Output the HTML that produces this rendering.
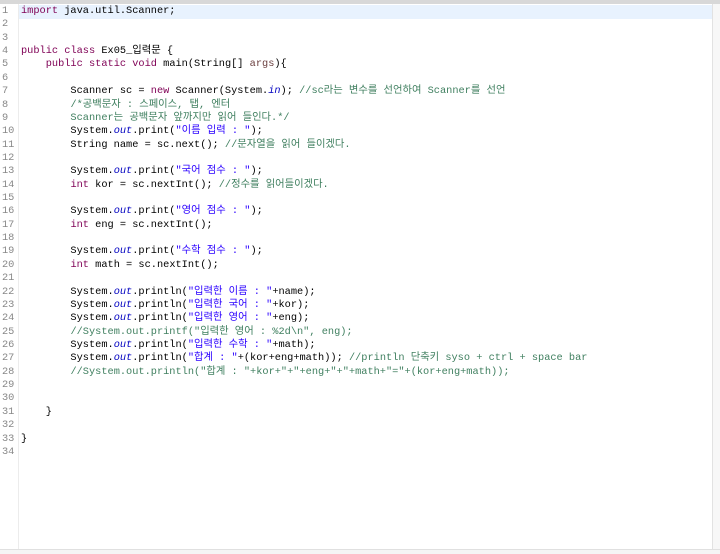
<!DOCTYPE html>
<html><head><meta charset="utf-8"><style>
body{margin:0;width:720px;height:553px;background:#fff;position:relative;overflow:hidden;font-family:"Liberation Mono","Noto Sans CJK KR",monospace;font-size:10.3px}
.top{position:absolute;left:0;top:0;width:720px;height:4px;background:#d8d8d8}
.rb{position:absolute;left:712px;top:4px;width:8px;height:549px;background:#f7f7f7;border-left:1px solid #e2e2e2}
.bb{position:absolute;left:0;top:549px;width:720px;height:4px;background:#f5f5f5;border-top:1px solid #e0e0e0}
.lb{position:absolute;left:18px;top:4px;width:1px;height:545px;background:#ececec}
.hl{position:absolute;left:19px;top:5px;width:693px;height:14px;background:#e8f2fe}
.ln{position:absolute;left:2px;top:5px;color:#888;line-height:13.36px;white-space:pre}
.code{position:absolute;left:21px;top:5px;line-height:13.36px;white-space:pre;color:#000}
.k{color:#7f0055}.s{color:#2a00ff}.c{color:#3f7f5f}.o{color:#0000c0;font-style:italic}.v{color:#6a3e3e}
</style></head><body>
<div class="top"></div><div class="hl"></div><div class="lb"></div><div class="rb"></div><div class="bb"></div>
<div class="ln">1
2
3
4
5
6
7
8
9
10
11
12
13
14
15
16
17
18
19
20
21
22
23
24
25
26
27
28
29
30
31
32
33
34</div>
<div class="code"><span class="k">import</span> java.util.Scanner;


<span class="k">public</span> <span class="k">class</span> Ex05_입력문 {
    <span class="k">public</span> <span class="k">static</span> <span class="k">void</span> main(String[] <span class="v">args</span>){

        Scanner sc = <span class="k">new</span> Scanner(System.<span class="o">in</span>); <span class="c">//sc라는 변수를 선언하여 Scanner를 선언</span>
        <span class="c">/*공백문자 : 스페이스, 탭, 엔터</span>
<span class="c">        Scanner는 공백문자 앞까지만 읽어 들인다.*/</span>
        System.<span class="o">out</span>.print(<span class="s">"이름 입력 : "</span>);
        String name = sc.next(); <span class="c">//문자열을 읽어 들이겠다.</span>

        System.<span class="o">out</span>.print(<span class="s">"국어 점수 : "</span>);
        <span class="k">int</span> kor = sc.nextInt(); <span class="c">//정수를 읽어들이겠다.</span>

        System.<span class="o">out</span>.print(<span class="s">"영어 점수 : "</span>);
        <span class="k">int</span> eng = sc.nextInt();

        System.<span class="o">out</span>.print(<span class="s">"수학 점수 : "</span>);
        <span class="k">int</span> math = sc.nextInt();

        System.<span class="o">out</span>.println(<span class="s">"입력한 이름 : "</span>+name);
        System.<span class="o">out</span>.println(<span class="s">"입력한 국어 : "</span>+kor);
        System.<span class="o">out</span>.println(<span class="s">"입력한 영어 : "</span>+eng);
        <span class="c">//System.out.printf("입력한 영어 : %2d\n", eng);</span>
        System.<span class="o">out</span>.println(<span class="s">"입력한 수학 : "</span>+math);
        System.<span class="o">out</span>.println(<span class="s">"합계 : "</span>+(kor+eng+math)); <span class="c">//println 단축키 syso + ctrl + space bar</span>
        <span class="c">//System.out.println("합계 : "+kor+"+"+eng+"+"+math+"="+(kor+eng+math));</span>


    }

}
</div>
</body></html>
